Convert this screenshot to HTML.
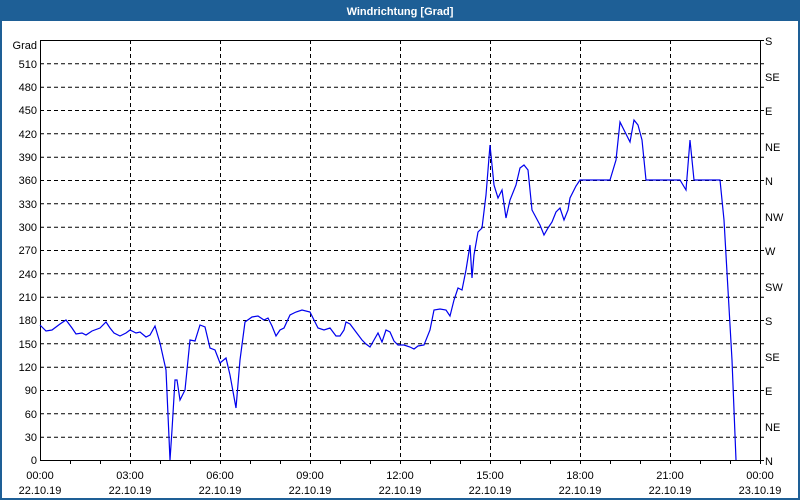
<!DOCTYPE html>
<html><head><style>
html,body{margin:0;padding:0;width:800px;height:500px;overflow:hidden;background:#fff;font-family:"Liberation Sans",sans-serif;}
</style></head><body>
<svg width="800" height="500" viewBox="0 0 800 500" xmlns="http://www.w3.org/2000/svg" font-family="Liberation Sans, sans-serif" font-size="11">
<rect x="0" y="0" width="800" height="500" fill="#1e5f96"/>
<rect x="2" y="21" width="796" height="477" fill="#fff"/>
<text x="400" y="15" fill="#fff" font-weight="bold" text-anchor="middle" font-size="11">Windrichtung [Grad]</text>
<g stroke="#000" stroke-dasharray="4,3" stroke-width="1">
<line x1="40" x2="760" y1="63.8" y2="63.8"/><line x1="40" x2="760" y1="87.2" y2="87.2"/><line x1="40" x2="760" y1="110.5" y2="110.5"/><line x1="40" x2="760" y1="133.8" y2="133.8"/><line x1="40" x2="760" y1="157.2" y2="157.2"/><line x1="40" x2="760" y1="180.5" y2="180.5"/><line x1="40" x2="760" y1="203.8" y2="203.8"/><line x1="40" x2="760" y1="227.2" y2="227.2"/><line x1="40" x2="760" y1="250.5" y2="250.5"/><line x1="40" x2="760" y1="273.8" y2="273.8"/><line x1="40" x2="760" y1="297.2" y2="297.2"/><line x1="40" x2="760" y1="320.5" y2="320.5"/><line x1="40" x2="760" y1="343.8" y2="343.8"/><line x1="40" x2="760" y1="367.2" y2="367.2"/><line x1="40" x2="760" y1="390.5" y2="390.5"/><line x1="40" x2="760" y1="413.8" y2="413.8"/><line x1="40" x2="760" y1="437.2" y2="437.2"/>
<line x1="130.5" x2="130.5" y1="40" y2="460"/><line x1="220.5" x2="220.5" y1="40" y2="460"/><line x1="310.5" x2="310.5" y1="40" y2="460"/><line x1="400.5" x2="400.5" y1="40" y2="460"/><line x1="490.5" x2="490.5" y1="40" y2="460"/><line x1="580.5" x2="580.5" y1="40" y2="460"/><line x1="670.5" x2="670.5" y1="40" y2="460"/>
</g>
<rect x="40.5" y="40.5" width="720" height="420" fill="none" stroke="#000"/>
<g stroke="#000">
<path d="M760 40.5h4M760 63.8h4M760 87.2h4M760 110.5h4M760 133.8h4M760 157.2h4M760 180.5h4M760 203.8h4M760 227.2h4M760 250.5h4M760 273.8h4M760 297.2h4M760 320.5h4M760 343.8h4M760 367.2h4M760 390.5h4M760 413.8h4M760 437.2h4M760 460.5h4"/>
<path d="M70.5 460v4M100.5 460v4M130.5 460v4M160.5 460v4M190.5 460v4M220.5 460v4M250.5 460v4M280.5 460v4M310.5 460v4M340.5 460v4M370.5 460v4M400.5 460v4M430.5 460v4M460.5 460v4M490.5 460v4M520.5 460v4M550.5 460v4M580.5 460v4M610.5 460v4M640.5 460v4M670.5 460v4M700.5 460v4M730.5 460v4M760.5 460v4"/>
</g>
<polyline fill="none" stroke="#0000ee" stroke-width="1.2" points="40,325 46,331 52,330 60,324 66,320 72,328 76,334 82,333 86,335 92,331 100,328 106,322 110,328 114,333 120,336 126,333 130,330 136,333 140,332 146,337 150,335 155,326 160,343 166,370 170,460 172,430 175,380 177,380 180,400 185,390 190,340 195,341 200,325 205,327 210,348 215,350 220,363 226,358 230,375 236,408 240,360 245,322 252,317 258,316 264,320 268,318 272,326 276,336 280,330 284,328 290,315 296,312 302,310 310,312 314,320 318,328 324,330 330,328 336,336 340,336 344,330 346,322 350,324 356,332 362,340 366,344 370,347 374,340 378,333 382,342 386,330 390,332 394,341 398,345 404,345 410,347 414,349 418,346 424,345 430,330 434,310 440,309 446,310 450,316 454,300 458,288 462,290 466,270 470,245 472,278 474,255 478,232 482,228 486,195 490,145 494,185 498,198 502,190 506,218 510,200 516,185 520,168 524,165 528,170 532,210 540,225 544,235 548,228 552,222 556,212 560,208 564,220 568,210 570,198 576,186 580,180 610,180 616,160 620,122 624,130 630,142 634,120 638,125 642,140 646,180 680,180 686,190 690,140 694,180 720,180 724,220 728,290 732,360 736,460"/>
<g text-anchor="end" fill="#000">
<text x="37" y="49">Grad</text>
<text x="37" y="68">510</text><text x="37" y="91">480</text><text x="37" y="114">450</text><text x="37" y="138">420</text><text x="37" y="161">390</text><text x="37" y="184">360</text><text x="37" y="208">330</text><text x="37" y="231">300</text><text x="37" y="254">270</text><text x="37" y="278">240</text><text x="37" y="301">210</text><text x="37" y="324">180</text><text x="37" y="348">150</text><text x="37" y="371">120</text><text x="37" y="394">90</text><text x="37" y="418">60</text><text x="37" y="441">30</text><text x="37" y="464">0</text>
</g>
<g fill="#000">
<text x="765" y="45">S</text><text x="765" y="81">SE</text><text x="765" y="115">E</text><text x="765" y="151">NE</text><text x="765" y="185">N</text><text x="765" y="221">NW</text><text x="765" y="255">W</text><text x="765" y="291">SW</text><text x="765" y="325">S</text><text x="765" y="361">SE</text><text x="765" y="395">E</text><text x="765" y="431">NE</text><text x="765" y="465">N</text>
</g>
<g text-anchor="middle" fill="#000">
<text x="40" y="479">00:00</text><text x="40" y="494">22.10.19</text>
<text x="130" y="479">03:00</text><text x="130" y="494">22.10.19</text>
<text x="220" y="479">06:00</text><text x="220" y="494">22.10.19</text>
<text x="310" y="479">09:00</text><text x="310" y="494">22.10.19</text>
<text x="400" y="479">12:00</text><text x="400" y="494">22.10.19</text>
<text x="490" y="479">15:00</text><text x="490" y="494">22.10.19</text>
<text x="580" y="479">18:00</text><text x="580" y="494">22.10.19</text>
<text x="670" y="479">21:00</text><text x="670" y="494">22.10.19</text>
<text x="760" y="479">00:00</text><text x="760" y="494">23.10.19</text>
</g>
</svg>
</body></html>
